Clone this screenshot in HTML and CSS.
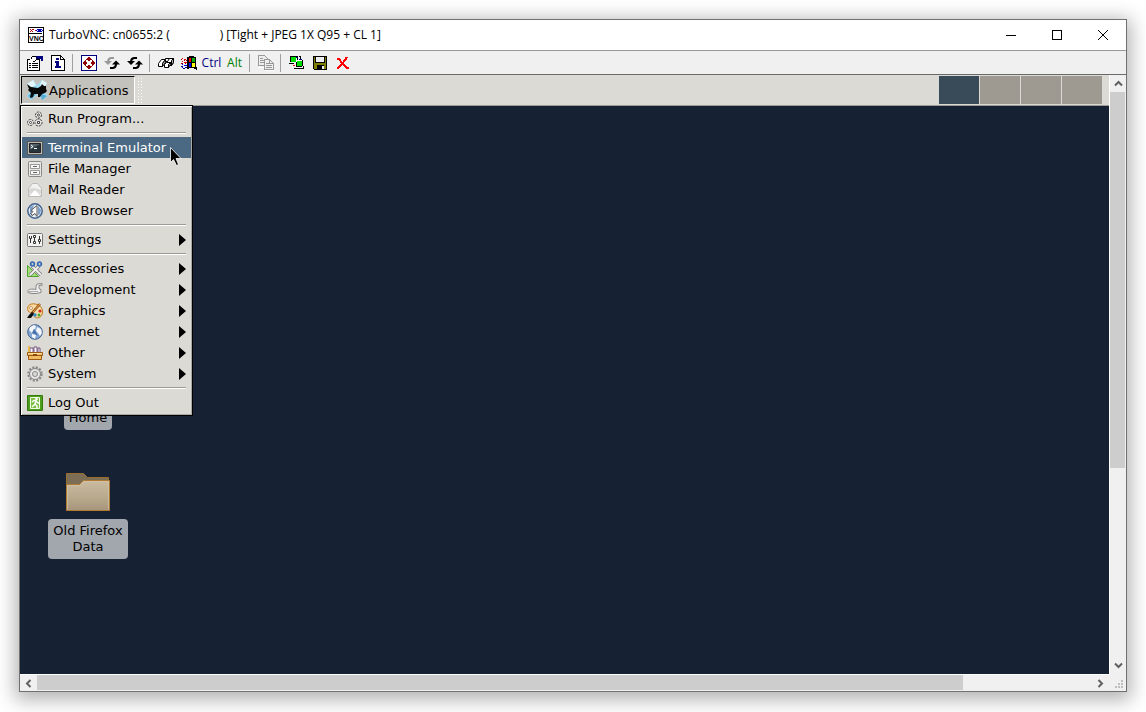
FILE: index.html
```html
<!DOCTYPE html>
<html lang="en">
<head>
<meta charset="utf-8">
<title>TurboVNC</title>
<link rel="stylesheet" href="styles.css">
</head>
<body>
<main class="window">
  <header class="titlebar">
    <svg class="icon" viewBox="0 0 16 16" shape-rendering="crispEdges" aria-hidden="true">
      <path fill="#fff" stroke="#000" d="M.5.5h15v15H.5z"/>
      <path stroke="#b00000" d="M2 2.500h1m1 0h1m-2 1h1m-2 1h1m1 0h1M5 2.500h1M7 3.500h1"/>
      <path fill="#0000b0" d="M9 2h5v1h1v1h-1v1H9V4H8V3h1z"/><path fill="#fff" d="M9 3h1v1H9zM13 3h1v1h-1z"/>
      <path stroke="#000" d="M1 6.500h13"/>
      <text x="1" y="14" class="logo-text">VNC</text>
    </svg>
    <h1 class="title">TurboVNC: cn0655:2 (<span class="user"></span>) [Tight + JPEG 1X Q95 + CL 1]</h1>
    <div class="controls">
      <button aria-label="Minimize"><svg viewBox="0 0 10 10" shape-rendering="crispEdges"><path d="M0 5.500h10"/></svg></button>
      <button aria-label="Maximize"><svg viewBox="0 0 10 10" shape-rendering="crispEdges"><path d="M.5.5h9v9h-9z"/></svg></button>
      <button aria-label="Close"><svg viewBox="0 0 10 10"><path d="M0 0l10 10M10 0L0 10"/></svg></button>
    </div>
  </header>

  <div class="toolbar" role="toolbar" aria-label="Connection">
    <button aria-label="Connection options"><svg class="icon" viewBox="0 0 16 16" shape-rendering="crispEdges"><path fill="#fff" stroke="#000" d="M.5 4.500h12v11H.5z"/><path fill="#fff" stroke="#000" d="M3.500 4.500l2-3h4v3l-2 2H6"/><path fill="#000080" d="M9 1h7v5h-2V4h-3L9 3z"/><path stroke="#000" d="M2 8.500h2m1 0h6M2 10.500h2m1 0h6M2 12.500h2m1 0h6"/></svg></button>
    <button aria-label="Connection info"><svg class="icon" viewBox="0 0 16 16" shape-rendering="crispEdges"><path fill="#fff" stroke="#000" d="M1.500.5h9l4 4v11h-13z"/><path fill="none" stroke="#000" d="M10.500 0v4.500H15"/><path fill="#000080" d="M6 3h3v2H6zM5 6h4v5h2v2H5v-2h1V8H5z"/></svg></button>
    <span class="rule"></span>
    <button aria-label="Full screen"><svg class="icon" viewBox="0 0 16 16" shape-rendering="crispEdges"><path fill="#fff" stroke="#000080" d="M.5.5h15v15H.5z"/><path fill="#900000" d="M7 2h2v1h1v1h1v1H9v2H7V5H5V4h1V3h1zM7 14h2v-1h1v-1h1v-1H9V9H7v2H5v1h1v1h1zM2 7v2h1v1h1v1h1V9h2V7H5V5H4v1H3v1zM14 7v2h-1v1h-1v1h-1V9H9V7h2V5h1v1h1v1z"/><path fill="#fff" d="M7 6h2v1h1v2H9v1H7V9H6V7h1z"/></svg></button>
    <button aria-label="Refresh screen"><svg class="icon" viewBox="0 0 16 16"><path fill="none" stroke="#999" stroke-width="2" d="M10 3H7Q4 3.500 4 7"/><path fill="#999" d="M0 6h8L4 10z"/><path fill="none" stroke="#000" stroke-width="2" d="M6 13h3q3-.5 3-4"/><path fill="#000" d="M8 9.500h8l-4-4z"/></svg></button>
    <button aria-label="Refresh all"><svg class="icon" viewBox="0 0 16 16"><path fill="none" stroke="#000" stroke-width="2" d="M10 3H7Q4 3.500 4 7M6 13h3q3-.5 3-4"/><path fill="#000" d="M0 6h8L4 10zM8 9.500h8l-4-4z"/></svg></button>
    <span class="rule"></span>
    <button aria-label="Send Ctrl Alt Del"><svg class="icon" viewBox="0 0 16 16"><g fill="#fff" stroke="#000"><path d="M9.500 5.500l2-2h4v4l-2 3h-4z"/><path fill="#aaa" d="M13.500 5.500l2-2v4l-2 3z"/><path d="M5.500 5.500l2-2h4l-2 3h-4z"/><path d="M.5 8.500l3-4h4l-3 4v3h-4z"/><path fill="#aaa" d="M4.500 8.500l3-4v3l-3 4z"/><path d="M6.500 9.500l2-2h4l-2 2v3h-4z"/><path fill="#aaa" d="M10.500 9.500l2-2v2l-2 3z"/></g></svg></button>
    <button aria-label="Send Ctrl Esc"><svg class="icon" viewBox="0 0 16 16" shape-rendering="crispEdges"><path fill="#000" d="M6 2h2V1h5v1h2v10h1v3h-1v-1h-2v-1H8v1H6z"/><path fill="red" d="M8 3h2v4H8zM1 3h1v1H1zM3 4h2v1H3zM1 6h1v1H1zM3 7h3v1H3z"/><path fill="#0a0" d="M11 3h3v4h-3z"/><path fill="#00f" d="M8 8h2v4H8zM1 9h1v1H1zM3 10h3v1H3zM1 12h1v1H1z"/><path fill="#ff0" d="M11 8h3v4h-3z"/><path stroke="#900000" d="M3 5.500h1m1 0h1M0 4.500h1M0 8.500h2m2 0h1"/><path stroke="#000080" d="M0 11.500h2m2 1h2M2 13.500h2"/></svg></button>
    <button class="key ctrl">Ctrl</button>
    <button class="key alt">Alt</button>
    <span class="rule"></span>
    <button aria-label="Transfer files" disabled><svg class="icon" viewBox="0 0 16 16" shape-rendering="crispEdges"><path fill="none" stroke="#fff" d="M1.500 1.500h6l3 3v8h-9zM7.500 6.500h5l3 3v6h-8z"/><g fill="#eee" stroke="#999"><path d="M.5.5h6l3 3v7h-9z"/><path d="M6.500 4.500h5l4 4v6h-9z"/></g><path fill="none" stroke="#999" d="M2 3.500h3m-3 2h4m-4 2h4M8 8.500h3m-3 2h6m-6 2h6M11.500 4v4.500H15"/></svg></button>
    <span class="rule"></span>
    <button aria-label="New connection"><svg class="icon" viewBox="0 0 16 16" shape-rendering="crispEdges"><path fill="#fff" d="M1 1h7v6H1zM7 5h6v7H7z"/><path fill="none" stroke="#000" d="M1.500 7V1.500H8M0 8.500h5M8.500 1v4M10 1.500h1.500V4M7.500 7v5M13.500 5v6M5 13.500h9.500V11M8 11.500h5"/><path fill="#0d0" d="M2 2h5v5H2zM8 6h5v5H8z"/><path stroke="#000080" d="M7 2.500h2M10 4.500h3"/><path stroke="red" d="M4 10.500h2"/></svg></button>
    <button aria-label="Save connection"><svg class="icon" viewBox="0 0 16 16" shape-rendering="crispEdges"><path fill="#000" d="M1 1h14v14H2l-1-1z"/><path fill="#808000" d="M2 2h1v6h10V2h1v12h-2v-4H5v4H2z"/><path fill="#eee" d="M4 2h8v5H4zM10 11h2v3h-2z"/></svg></button>
    <button aria-label="Disconnect"><svg class="icon" viewBox="0 0 16 16" shape-rendering="crispEdges"><path fill="none" stroke="red" stroke-width="2" d="M2 4h2l3 4 5 5h2M12 2l-2 3-4 5-3 3v1"/></svg></button>
  </div>

  <div class="viewport">
    <section class="desktop" aria-label="Remote desktop">
      <div class="panel">
        <button class="apps" aria-expanded="true">
          <svg class="mouse" viewBox="0 0 22 22"><path fill="#9ddcf3" d="M1 5l6-4 4 5 5-5 5 3-4 7 5 6-5 4-6-5-6 5-4-4 4-6z"/><path fill="#e3f5fb" d="M1 5l6-4 3 5-6 3zM16 1l5 3-3 5-4-3z"/><path fill="#2f91be" opacity=".65" d="M2 17l4-4 4 2-4 5zM14 14l7 3-5 4z"/><path fill="#080808" d="M1 5l4 3 7 1 3-2 1-2 2 2h2v3l1 2-2 2-3 1-2 3h-2v-3H8l-1 3-3 1 1-5-3-3 1-1z"/></svg>
          <span>Applications</span>
        </button>
        <span class="grip"></span>
        <div class="pager"><button class="current" aria-label="Workspace 1"></button><button aria-label="Workspace 2"></button><button aria-label="Workspace 3"></button><button aria-label="Workspace 4"></button></div>
      </div>

      <nav class="menu" aria-label="Applications">
        <button><svg class="icon" viewBox="0 0 16 16"><g fill="#e4e4e2" stroke="#333" stroke-dasharray="2 1"><circle cx="11.500" cy="4" r="3"/><circle cx="3.500" cy="11.500" r="3"/><circle cx="11.500" cy="11.500" r="3.500"/></g><g fill="#fff" stroke="#444"><circle cx="11.500" cy="4" r="1"/><circle cx="3.500" cy="11.500" r="1"/><path d="M10.500 10.500h2v2h-2z"/></g></svg>Run Program...</button>
        <hr>
        <button class="selected"><svg class="icon" viewBox="0 0 16 16"><path fill="#b8b8b4" stroke="#555" d="M.5 1.500h15v13H.5z"/><path fill="#27343b" stroke="#222" d="M2.500 3.500h11v9h-11z"/><path fill="#55626a" d="M3 4h10L3 10z"/><path fill="none" stroke="#fff" d="M4 5l2 1.500L4 8M7 8.500h3"/></svg>Terminal Emulator</button>
        <button><svg class="icon" viewBox="0 0 16 16"><rect x="1.500" y=".5" width="13" height="15" rx="1" fill="#e8e8e5" stroke="#888"/><path fill="#f8f8f8" stroke="#999" d="M3.500 3.500h9v4h-9zM3.500 9.500h9v4h-9z"/><path stroke="#666" d="M6 5.500h4M6 11.500h4"/></svg>File Manager</button>
        <button><svg class="icon" viewBox="0 0 16 16"><path fill="#f1f1ef" stroke="#bbb" d="M1.500 6.500l4-5h5l4 5v8h-13z"/><path fill="#fff" stroke="#ccc" d="M2 14l5-6h2l5 6"/><path fill="#d7d7d5" d="M2 7c3-1 6-1 12 1v4L9 8H7l-5 4z"/></svg>Mail Reader</button>
        <button><svg class="icon" viewBox="0 0 16 16"><circle cx="8" cy="8" r="7.200" fill="#e4ebf3" stroke="#42638e" stroke-width="1.500"/><path fill="#7e9fc6" d="M3 4l4-2-2 6 1 5-3-2zM11 3l3 4-1 4-2 1z"/><path fill="#fff" stroke="#555" d="M10 2.500v11l-2-3-3 2-1-2 2-2-2-1z"/></svg>Web Browser</button>
        <hr>
        <button><svg class="icon" viewBox="0 0 16 16"><rect x=".5" y="1.500" width="15" height="13" rx="1" fill="#f2f2f0" stroke="#777"/><path fill="none" stroke="#333" d="M2.500 4v2.500h2V4M3.500 6v5M6.500 3.500h2v2h-2zM7.500 6v3M6.500 9.500h2v2h-2zM12.500 4v3m-1 .5h2v2h-2zM12.500 10v2"/></svg>Settings<span class="arrow"></span></button>
        <hr>
        <button><svg class="icon" viewBox="0 0 16 16"><path fill="#a4df79" stroke="#50a52c" d="M.5 4.500l11 11H.5z"/><path fill="#dcdad5" d="M3 10l3 3H3z"/><path stroke="#777" stroke-width="3.500" d="M5 5l9 9M12 5l-9 9"/><path stroke="#eee" stroke-width="2" d="M5 5l9 9M12 5l-9 9"/><g fill="none" stroke="#3b6db1" stroke-width="1.800"><circle cx="5.500" cy="3" r="1.800"/><circle cx="12.500" cy="3" r="1.800"/></g></svg>Accessories<span class="arrow"></span></button>
        <button><svg class="icon" viewBox="0 0 16 16"><path fill="#eee" stroke="#888" d="M1 9.500c-1-2 3-3 8-2V4l1-2 5-.500v2h-3v3l2 1v3l-5 1H5l-4-1z"/><path fill="none" stroke="#aaa" d="M2 9.500h9M14 2v2"/></svg>Development<span class="arrow"></span></button>
        <button><svg class="icon" viewBox="0 0 16 16"><path fill="#f8dba5" stroke="#c47618" d="M3 1.500C7-.5 16 2 15.500 9c0 6-6 7-8 5-1-2 1-4-2-4C0 10-1 4 3 1.500z"/><circle cx="4" cy="5" r="1.500" fill="#fff" stroke="#a86215" stroke-width=".6"/><circle cx="8" cy="12" r="1.700" fill="#368bd2"/><circle cx="12" cy="12" r="1.500" fill="#45a934"/><circle cx="13" cy="8" r="1.600" fill="#d12a20"/><path stroke="#8c4d1c" stroke-width="2.500" d="M13 1L5 10"/><path stroke="#efaa43" d="M13 1L6 9"/><path fill="#111" d="M5 9l2 2-3 4H0l2-3z"/></svg>Graphics<span class="arrow"></span></button>
        <button><svg class="icon" viewBox="0 0 16 16"><circle cx="8" cy="8" r="7.300" fill="#84a7d4" stroke="#3c5f91"/><path fill="#f3f5f8" d="M3 3l4-2 2 1-1 3-2 1 1 2-2 1-3-3zM10 3l4 2 1 4-2 3-2-3-2-2zM5 10l4 1-1 4-3-2z"/><path fill="#4470aa" d="M7 5l2 3 2 4-3-2-3-1z"/></svg>Internet<span class="arrow"></span></button>
        <button><svg class="icon" viewBox="0 0 16 16"><path fill="#fff" stroke="#72507c" d="M3 8V3h3v5m1 0V2h3v6m1 0V3h2v5"/><path stroke="#e8b54b" stroke-width="2" d="M2 1v7"/><path fill="#f2bb61" stroke="#9c5912" d="M.5 7.500h15v3H.5zM1.500 10.500h13v4h-13z"/><path stroke="#ffe0a0" d="M1 8.500h14"/><path stroke="#884a0c" stroke-width="2" d="M6 10h4"/></svg>Other<span class="arrow"></span></button>
        <button><svg class="icon" viewBox="0 0 16 16"><circle cx="8" cy="8" r="6.500" fill="none" stroke="#888" stroke-width="2.400" stroke-dasharray="2 1.400"/><circle cx="8" cy="8" r="5.500" fill="#ddd" stroke="#888"/><circle cx="8" cy="8" r="3.500" fill="none" stroke="#eee"/><circle cx="8" cy="8" r="2.500" fill="#dcdad5" stroke="#888"/></svg>System<span class="arrow"></span></button>
        <hr>
        <button><svg class="icon" viewBox="0 0 16 16"><path fill="#4f9d1c" stroke="#347b0b" d="M.5.5h15v15H.5z"/><path fill="#7cc040" stroke="#f2fbea" d="M3.500 2.500h9v11h-9z"/><circle cx="9.500" cy="4" r="1.300" fill="#fff"/><path fill="none" stroke="#fff" stroke-width="1.500" d="M5 7l2-1.500h2L8 9l2 2v2M8 9l-3 3M9 6l2 2h2"/></svg>Log Out</button>
        <svg class="cursor" viewBox="0 0 12 19" aria-hidden="true"><path fill="#000" stroke="#fff" stroke-width=".8" d="M.5.5v15l3-3 3 6 2-1-2.500-6H11z"/></svg>
      </nav>

      <div class="shortcuts">
        <a href="#home" class="shortcut"><span class="label">Home</span></a>
        <a href="#firefox" class="shortcut">
          <svg class="folder" viewBox="0 0 46 40"><defs><linearGradient id="front" x2="0" y2="1"><stop stop-color="#cbbba0"/><stop offset=".6" stop-color="#b7a78b"/><stop offset="1" stop-color="#a7967b"/></linearGradient></defs><path fill="#7c6d55" stroke="#9a6c2c" d="M1.500 38V1.500h17l4 4h21v5H44v28z"/><path fill="url(#front)" stroke="#b07a30" d="M1.500 12.500h13l4-4h26v30h-43z"/><path fill="none" stroke="#d0c2a9" stroke-opacity=".7" d="M2.500 37.500v-24h12l4-4h25v28"/></svg>
          <span class="label">Old Firefox<br>Data</span>
        </a>
      </div>
    </section>

    <div class="scroll vertical">
      <button aria-label="Scroll up"><svg viewBox="0 0 9 9"><path d="M1 6.500L4.500 3 8 6.500"/></svg></button>
      <div class="track"><div class="thumb"></div></div>
      <button aria-label="Scroll down"><svg viewBox="0 0 9 9"><path d="M1 2.500L4.500 6 8 2.500"/></svg></button>
    </div>
    <div class="scroll horizontal">
      <button aria-label="Scroll left"><svg viewBox="0 0 9 9"><path d="M6.500 1L3 4.500 6.500 8"/></svg></button>
      <div class="track"><div class="thumb"></div></div>
      <button aria-label="Scroll right"><svg viewBox="0 0 9 9"><path d="M2.500 1L6 4.500 2.500 8"/></svg></button>
    </div>
    <div class="resize"><svg viewBox="0 0 8 8" shape-rendering="crispEdges"><path fill="#bfbfbf" d="M6 0h2v2H6zM3 3h2v2H3zM6 3h2v2H6zM0 6h2v2H0zM3 6h2v2H3zM6 6h2v2H6z"/></svg></div>
  </div>
</main>
</body>
</html>
```

FILE: styles.css
```css
* { box-sizing: border-box; }

body {
  margin: 0;
  padding: 19px 19px 20px;
  min-height: 100vh;
  display: flex;
  background: #fff;
  font-family: "DejaVu Sans", sans-serif;
  font-size: 13px;
  color: #000;
}

button {
  margin: 0;
  padding: 0;
  border: 0;
  background: none;
  font: inherit;
  color: inherit;
}

svg { display: block; flex: none; }
.icon { width: 16px; height: 16px; }

.window {
  flex: 1;
  display: flex;
  flex-direction: column;
  border: 1px solid #707070;
  box-shadow: 0 4px 18px 4px rgba(0, 0, 0, .3);
}

.titlebar {
  display: flex;
  align-items: center;
  height: 31px;
  padding: 0 0 1px 8px;
  background: #fff;
  border-bottom: 1px solid #999;
}
.logo-text { font: bold 7px "Liberation Sans", sans-serif; }
.title {
  flex: 1;
  margin: 0 0 0 5px;
  font: 12px/16px "Open Sans", "Noto Sans", sans-serif;
  white-space: nowrap;
}
.user { display: inline-block; width: 50px; }
.controls { display: flex; }
.controls button {
  display: grid;
  place-items: center;
  width: 46px;
  height: 30px;
}
.controls svg { width: 10px; height: 10px; fill: none; stroke: #000; }

.toolbar {
  display: flex;
  height: 24px;
  padding-left: 3px;
  background: #f0f0f0;
  border-bottom: 1px solid #696969;
}
.toolbar button {
  display: grid;
  place-items: center;
  width: 23px;
}
.toolbar .rule { width: 1px; height: 18px; margin: 3px 4px 0 3px; background: #a0a0a0; }
.toolbar .key { font: 12px "Open Sans", "Noto Sans", sans-serif; }
.toolbar .ctrl { color: #000080; }
.toolbar .alt { color: #008000; }

.viewport {
  flex: 1;
  display: grid;
  grid-template: 1fr 17px / 1fr 17px;
  background: #f0f0f0;
}

.desktop { position: relative; background: #162233; }
.panel {
  display: flex;
  height: 31px;
  padding: 1px;
  background: #dcdad5;
  border-bottom: 1px solid #9c9a94;
}
.apps {
  display: flex;
  align-items: center;
  gap: 1px;
  width: 114px;
  padding-left: 4px;
  background: #c4c2bd;
  border: 1px solid #000;
  border-color: #000 #fff #fff #000;
}
.mouse { width: 22px; height: 22px; }
.grip {
  width: 5px;
  margin: 1px 2px;
  background: radial-gradient(circle, #fff 1px, transparent 1px) 0 0 / 3px 3px;
}
.pager { display: flex; gap: 1px; margin-left: auto; padding-right: 6px; }
.pager button { width: 40px; height: 28px; background: #9e9a92; }
.pager .current { background: #394a59; }

.menu {
  position: absolute;
  top: 30px;
  left: 0;
  width: 173px;
  padding: 2px 1px;
  background: #dcdad5;
  border: 1px solid #000;
  box-shadow: inset 1px 1px #fff, inset -1px -1px #aaa8a2;
}
.menu button {
  display: flex;
  align-items: center;
  gap: 5px;
  width: 100%;
  height: 21px;
  padding: 0 5px;
  text-align: left;
}
.menu .selected { background: #4b6983; color: #fff; }
.menu hr {
  height: 2px;
  margin: 3px 5px;
  border: 0;
  border-top: 1px solid #9c9a94;
  border-bottom: 1px solid #fff;
}
.arrow {
  margin-left: auto;
  border: 6px solid transparent;
  border-left: 7px solid #000;
  border-right: 0;
}
.cursor { position: absolute; top: 41px; left: 149px; width: 12px; height: 19px; }

.shortcuts {
  display: flex;
  flex-direction: column;
  gap: 42px;
  width: 136px;
  padding-top: 300px;
}
.shortcut {
  display: flex;
  flex-direction: column;
  align-items: center;
  gap: 7px;
  color: #000;
  text-align: center;
  text-decoration: none;
}
.label {
  padding: 4px 5px;
  border-radius: 4px;
  background: #a2a7ae;
  line-height: 16px;
}
.folder { width: 46px; height: 40px; }

.scroll { display: flex; background: #f0f0f0; }
.scroll button { display: grid; place-items: center; width: 16px; height: 17px; }
.scroll svg { width: 9px; height: 9px; fill: none; stroke: #606060; stroke-width: 2; }
.track { flex: 1; }
.thumb { background: #cdcdcd; }
.vertical { flex-direction: column; border-left: 1px solid #fff; }
.vertical .thumb { height: 375px; height: calc(67% - 3px); margin-right: 1px; }
.horizontal { border-top: 1px solid #fff; }
.horizontal button { width: 17px; height: 16px; }
.horizontal .track { display: flex; }
.horizontal .thumb { width: calc(88% - 2px); margin-bottom: 1px; }
.resize { display: flex; align-items: end; justify-content: end; padding: 3px; }
.resize svg { width: 8px; height: 8px; }
```
